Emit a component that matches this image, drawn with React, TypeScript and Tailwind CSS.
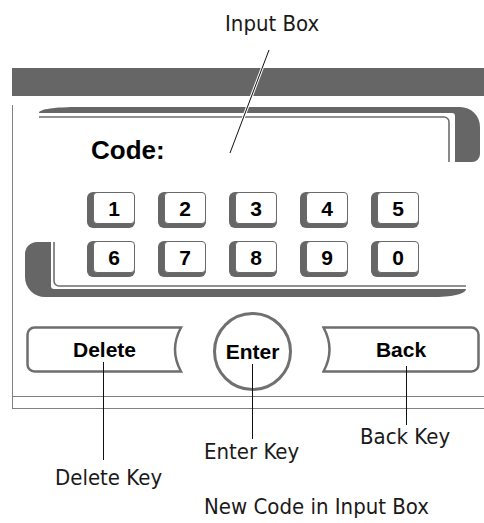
const keys = ["1", "2", "3", "4", "5", "6", "7", "8", "9", "0"];

function Key({ label }: { label: string }) {
  return (
    <div className="w-[48px] h-[36px] rounded-[6px] bg-[#666666] pl-[6px] pb-[4px]">
      <div className="h-full rounded-[4px] border border-[#6a6a6a] bg-white flex items-center justify-center text-[21px] font-bold text-black leading-none">
        {label}
      </div>
    </div>
  );
}

export default function App() {
  const note = "font-['DejaVu_Sans_Condensed','Liberation_Sans_Narrow','Arial_Narrow',sans-serif] text-[22px] leading-[22px] text-[#1a1a1a] whitespace-nowrap";

  return (
    <div className="relative w-[484px] h-[523px] bg-white overflow-hidden font-['Liberation_Sans',Arial,sans-serif]">
      {/* Caption above */}
      <div className="h-[68px] pl-[225px] pt-[13px]">
        <span className={note}>Input Box</span>
      </div>

      <div className="ml-[12px]">
        <div className="h-[28px] bg-[#666666]" />
        <div className="border-l border-[#808080]">
          {/* Input box */}
          <div className="relative ml-[12px] mt-[9px] w-[455px] h-[192px]">
            <svg className="absolute inset-0" width="455" height="192" viewBox="0 0 455 192">
              <path
                d="M 14 8 C 14 4, 30 2, 55 2 L 435 2 A 20 20 0 0 1 455 22 L 455 49 A 8 8 0 0 1 447 57 L 430 57 L 430 11 A 3 3 0 0 0 427 8 Z"
                fill="#666666"
              />
              <path d="M 14 12 L 419 12 A 5 5 0 0 1 424 17 L 424 57" fill="none" stroke="#6e6e6e" strokeWidth="1.6" />
              <path
                d="M 12 137 L 26 137 L 26 181 A 3 3 0 0 0 29 184 L 441 184 C 441 188, 430 192, 410 192 L 20 192 A 20 20 0 0 1 0 172 L 0 149 A 12 12 0 0 1 12 137 Z"
                fill="#666666"
              />
              <path d="M 29 137 L 29 176 A 5 5 0 0 0 34 181 L 441 181" fill="none" stroke="#6e6e6e" strokeWidth="1.6" />
            </svg>
            <div className="relative pl-[66px] pt-[31px] text-[26px] leading-[28px] font-bold text-black">Code:</div>
            <div className="relative mt-[28px] ml-[62px] grid grid-cols-[repeat(5,48px)] gap-x-[23px] gap-y-[13px]">
              {keys.map((k) => (
                <Key key={k} label={k} />
              ))}
            </div>
          </div>

          {/* Delete / Enter / Back */}
          <div className="mt-[15px] ml-[13px] flex items-start">
            <div className="relative mt-[14px] w-[157px] h-[47px] flex items-center justify-center">
              <svg className="absolute inset-0" width="157" height="47" viewBox="0 0 157 47">
                <path
                  d="M 8.5 1.5 L 155 1.5 Q 143 23.5 155 45.5 L 8.5 45.5 A 7 7 0 0 1 1.5 38.5 L 1.5 8.5 A 7 7 0 0 1 8.5 1.5 Z"
                  fill="white"
                  stroke="#6e6e6e"
                  strokeWidth="2.5"
                />
              </svg>
              <span className="relative text-[21px] font-bold text-black leading-none">Delete</span>
            </div>
            <div className="ml-[30px] w-[79px] h-[79px] rounded-full border-[3px] border-[#707070] flex items-center justify-center">
              <span className="text-[21px] font-bold text-black leading-none">Enter</span>
            </div>
            <div className="relative ml-[30px] mt-[14px] w-[158px] h-[47px] flex items-center justify-center">
              <svg className="absolute inset-0" width="158" height="47" viewBox="0 0 158 47">
                <path
                  d="M 1.5 1.5 L 149.5 1.5 A 7 7 0 0 1 156.5 8.5 L 156.5 38.5 A 7 7 0 0 1 149.5 45.5 L 1.5 45.5 Q 13.5 23.5 1.5 1.5 Z"
                  fill="white"
                  stroke="#6e6e6e"
                  strokeWidth="2.5"
                />
              </svg>
              <span className="relative text-[21px] font-bold text-black leading-none">Back</span>
            </div>
          </div>

          <div className="mt-[5px] h-[13px] border-y border-[#808080]" />
        </div>
      </div>

      {/* Callout leader lines */}
      <svg className="absolute inset-0 pointer-events-none" width="484" height="523" viewBox="0 0 484 523">
        <line x1="269" y1="50" x2="230" y2="153" stroke="white" strokeWidth="3" />
        <line x1="269" y1="50" x2="230" y2="153" stroke="#111" strokeWidth="1" />
        <line x1="103.5" y1="362" x2="103.5" y2="460" stroke="#111" strokeWidth="1" />
        <line x1="252.5" y1="364" x2="252.5" y2="439" stroke="#111" strokeWidth="1" />
        <line x1="406.5" y1="366" x2="406.5" y2="425" stroke="#111" strokeWidth="1" />
      </svg>

      {/* Callout labels */}
      <span className={`absolute left-[360px] top-[426px] ${note}`}>Back Key</span>
      <span className={`absolute left-[204px] top-[441px] ${note}`}>Enter Key</span>
      <span className={`absolute left-[55px] top-[467px] ${note}`}>Delete Key</span>
      <span className={`absolute left-[204px] top-[496px] ${note}`}>New Code in Input Box</span>
    </div>
  );
}
